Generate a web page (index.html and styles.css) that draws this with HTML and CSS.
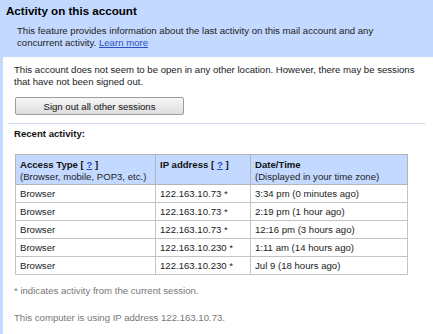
FILE: index.html
```html
<!DOCTYPE html>
<html>
<head>
<meta charset="utf-8">
<link rel="stylesheet" href="styles.css">
</head>
<body>
<div class="header">
  <div class="title">Activity on this account</div>
  <div class="desc">This feature provides information about the last activity on this mail account and any concurrent activity. <a href="#" class="link more">Learn more</a></div>
</div>
<div class="panel">
  <p class="info">This account does not seem to be open in any other location. However, there may be sessions that have not been signed out.</p>
  <div class="btnrow"><button class="btn">Sign out all other sessions</button></div>
  <div class="sep"></div>
  <div class="recent">Recent activity:</div>
  <table class="activity">
    <colgroup><col class="c1"><col class="c2"><col class="c3"></colgroup>
    <thead>
      <tr>
        <th><b>Access Type [ <a href="#" class="link">?</a> ]</b><br><span class="sub">(Browser, mobile, POP3, etc.)</span></th>
        <th><b>IP address [ <a href="#" class="link">?</a> ]</b><br><span class="sub">&nbsp;</span></th>
        <th><b>Date/Time</b><br><span class="sub">(Displayed in your time zone)</span></th>
      </tr>
    </thead>
    <tbody>
      <tr><td>Browser</td><td>122.163.10.73 *</td><td>3:34 pm (0 minutes ago)</td></tr>
      <tr><td>Browser</td><td>122.163.10.73 *</td><td>2:19 pm (1 hour ago)</td></tr>
      <tr><td>Browser</td><td>122.163.10.73 *</td><td>12:16 pm (3 hours ago)</td></tr>
      <tr><td>Browser</td><td>122.163.10.230 *</td><td>1:11 am (14 hours ago)</td></tr>
      <tr><td>Browser</td><td>122.163.10.230 *</td><td>Jul 9 (18 hours ago)</td></tr>
    </tbody>
  </table>
  <p class="note first">* indicates activity from the current session.</p>
  <p class="note">This computer is using IP address 122.163.10.73.</p>
</div>
</body>
</html>
```
FILE: styles.css
```css
html, body {
  margin: 0;
  padding: 0;
  background: #c3d9ff;
  font-family: "Liberation Sans", Arial, sans-serif;
  color: #222;
  font-size: 9.6px;
  line-height: 12px;
}
.header {
  height: 57px;
  box-sizing: border-box;
  padding: 4px 0 0 6px;
}
.title {
  font-weight: bold;
  font-size: 11.6px;
  line-height: 14px;
  color: #000;
}
.desc {
  margin: 7px 0 0 11px;
  width: 380px;
  color: #222;
}
.link {
  color: #2a4fc0;
  text-decoration: underline;
}
.more {
  display: inline-block;
  line-height: 12px;
}
.panel {
  background: #fff;
  margin-left: 3px;
  padding-top: 7px;
  height: 277px;
  box-sizing: border-box;
}
.info {
  margin: 0;
  padding: 0 8px 0 11px;
}
.btnrow {
  padding-left: 12px;
  margin-top: 9px;
}
.btn {
  display: block;
  width: 169px;
  height: 18px;
  padding: 0;
  font-family: "Liberation Sans", Arial, sans-serif;
  font-size: 9.6px;
  color: #111;
  background: linear-gradient(#f6f6f6, #dddddd);
  border: 1px solid #9c9c9c;
  border-radius: 2px;
}
.sep {
  height: 1px;
  background: #cdd8ea;
  margin: 8px 8px 0 5px;
}
.recent {
  font-weight: bold;
  color: #111;
  margin: 4px 0 0 11px;
}
.activity {
  margin: 14px 0 0 12px;
  width: 392px;
  border-collapse: collapse;
  table-layout: fixed;
  border: 1px solid #a9a9a9;
}
.c1 { width: 140px; }
.c2 { width: 95px; }
.c3 { width: 157px; }
.activity th {
  background: #c3d9ff;
  text-align: left;
  font-weight: normal;
  vertical-align: top;
  height: 30px;
  box-sizing: border-box;
  padding: 4px 4px 0 4px;
  border: 1px solid #b5b5b5;
  color: #222;
}
.activity th b {
  color: #111;
}
.activity td {
  height: 18px;
  box-sizing: border-box;
  padding: 0 4px;
  border: 1px solid #c4c4c4;
  white-space: nowrap;
}
.note {
  margin: 15px 0 0 11px;
  color: #777;
}
.note.first {
  margin-top: 10px;
}
```
